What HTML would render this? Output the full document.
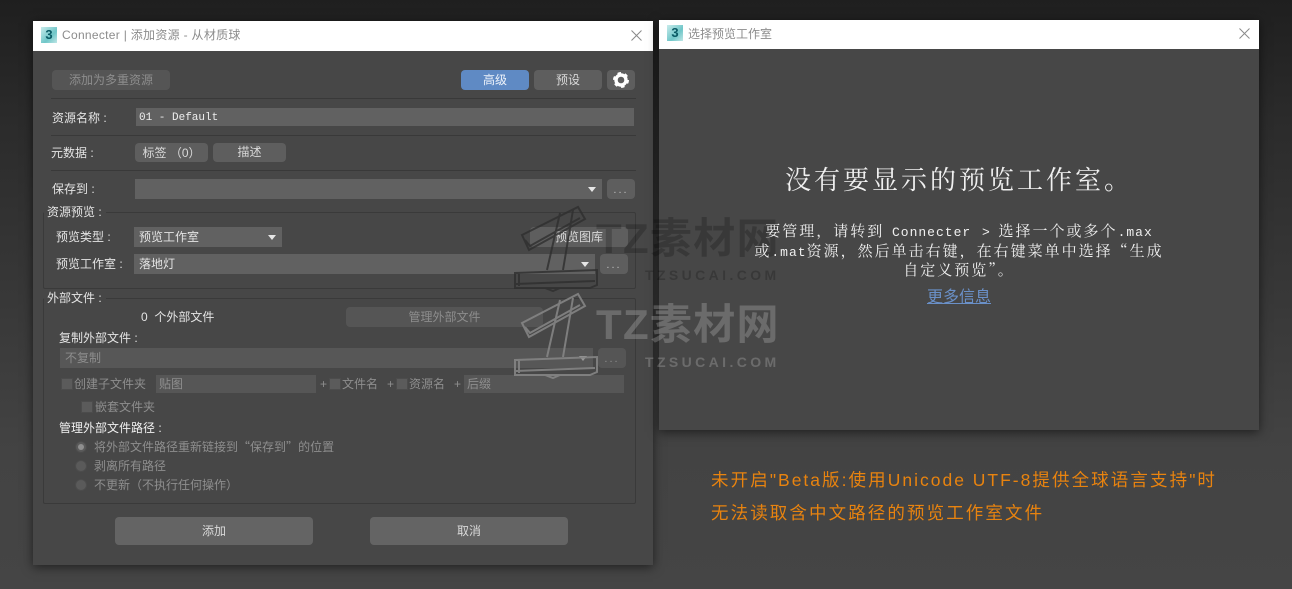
<!DOCTYPE html>
<html lang="zh-CN">
<head>
<meta charset="utf-8">
<title>Connecter</title>
<style>
html,body{margin:0;padding:0}
body{width:1292px;height:589px;overflow:hidden;position:relative;background:linear-gradient(180deg,#1f1f1f 0,#2b2b2b 120px,#383838 300px,#434343 450px,#454545 589px);font-family:"Liberation Sans","WenQuanYi Zen Hei","Noto Sans CJK SC",sans-serif;font-size:12px;color:#e4e4e4}
div,svg{position:absolute}
.dlg{background:#474747;box-shadow:0 2px 10px rgba(0,0,0,.55)}
.bar{background:#fff;color:#8c8c8c;font-size:12px;white-space:nowrap}
.t{white-space:nowrap;line-height:18px;height:18px}
.btn{background:#5e5e5e;border-radius:4px;text-align:center;color:#d9d9d9}
.dis{background:#555;color:#8d8d8d}
.inp{background:#616161}
.sep{height:1px;background:#393939;left:51px;width:585px}
.grp{border:1px solid #3a3a3a;border-radius:2px;box-sizing:border-box}
.lab{background:#474747;padding:0 4px 0 3px}
.gr{color:#8e8e8e}
.cb{width:10px;height:10px;background:#5b5b5b;box-shadow:0 0 0 1px #4c4c4c}
.rad{width:10px;height:10px;border-radius:50%;background:#5a5a5a;box-shadow:0 0 0 1px #4c4c4c;left:76px}
.arr{width:0;height:0;border-left:4px solid transparent;border-right:4px solid transparent;border-top:5px solid #e6e6e6}
.dots{letter-spacing:2px;color:#bdbdbd;font-size:11px}
.serif{font-family:"Liberation Serif","Noto Serif CJK SC",serif}
.ico{width:16px;height:16px;background:linear-gradient(135deg,#c9ecec,#6fc6c8 60%,#bfe6e6);color:#0a5a64;font:bold 13px/15px "Liberation Sans",sans-serif;text-align:center}
.wm{font-weight:bold;white-space:nowrap;font-family:"Liberation Sans","Noto Sans CJK SC",sans-serif}
.big{font-size:42px;line-height:44px;letter-spacing:1.3px;left:596px}
.sm{font-size:14px;line-height:16px;letter-spacing:3.4px;left:645px}
.msg{left:659px;width:600px;text-align:center;white-space:nowrap;color:#f0f0f0}
.or{left:711px;color:#e8830f;font-family:"Liberation Sans","Noto Sans CJK SC",sans-serif;font-size:17.5px;line-height:24px;white-space:nowrap;letter-spacing:2.1px}
.lt{letter-spacing:2px}
.l{font:13px "Liberation Mono",monospace;letter-spacing:1px}
.q{font-family:"Noto Sans CJK SC",sans-serif}
.qs{font-family:"Noto Serif CJK SC",serif}
.b{font-size:15px;line-height:19px;letter-spacing:2px;word-spacing:2px}
</style>
</head>
<body>

<!-- left dialog -->
<div class="dlg" style="left:33px;top:21px;width:620px;height:544px"></div>
<div class="bar" style="left:33px;top:21px;width:620px;height:30px"></div>
<div class="ico" style="left:41px;top:27px">3</div>
<div class="t" style="left:62px;top:26px;color:#8c8c8c;letter-spacing:.3px">Connecter | 添加资源 - 从材质球</div>
<svg style="left:630px;top:29px" width="13" height="13" viewBox="0 0 13 13"><path d="M1.5 1.5L11.5 11.5M11.5 1.5L1.5 11.5" stroke="#8a8a8a" stroke-width="1" fill="none"/></svg>

<div class="btn dis t" style="left:52px;top:70px;width:118px;height:20px;line-height:20px">添加为多重资源</div>
<div class="btn t" style="left:461px;top:70px;width:68px;height:20px;line-height:20px;background:#5f8ac4;color:#eef3fa">高级</div>
<div class="btn t" style="left:534px;top:70px;width:68px;height:20px;line-height:20px">预设</div>
<div class="btn" style="left:607px;top:70px;width:28px;height:20px"></div>
<svg style="left:612px;top:71px" width="18" height="18" viewBox="0 0 18 18"><circle cx="9" cy="9" r="5" fill="none" stroke="#fff" stroke-width="3.4"/><circle cx="9" cy="9" r="7" fill="none" stroke="#fff" stroke-width="2" stroke-dasharray="3.5 3.83"/></svg>

<div class="sep" style="top:98px"></div>
<div class="t" style="left:52px;top:109px">资源名称 :</div>
<div class="inp" style="left:136px;top:108px;width:498px;height:18px"></div>
<div class="t" style="left:139px;top:109px;font:11px/18px 'Liberation Mono',monospace;color:#eee">01 - Default</div>

<div class="sep" style="top:135px"></div>
<div class="t" style="left:51px;top:144px">元数据 :</div>
<div class="btn t" style="left:135px;top:143px;width:73px;height:19px;line-height:19px">标签 <span class="q">（</span>0<span class="q">）</span></div>
<div class="btn t" style="left:213px;top:143px;width:73px;height:19px;line-height:19px">描述</div>

<div class="sep" style="top:170px"></div>
<div class="t" style="left:52px;top:180px">保存到 :</div>
<div class="inp" style="left:135px;top:179px;width:467px;height:20px"></div>
<div class="arr" style="left:588px;top:187px"></div>
<div class="btn dots t" style="left:607px;top:179px;width:28px;height:20px;line-height:22px">...</div>

<!-- preview group -->
<div class="grp" style="left:43px;top:212px;width:593px;height:77px"></div>
<div class="t lab" style="left:44px;top:203px">资源预览 :</div>
<div class="t" style="left:56px;top:228px">预览类型 :</div>
<div class="inp t" style="left:134px;top:227px;width:148px;height:20px;line-height:20px;text-indent:5px">预览工作室</div>
<div class="arr" style="left:268px;top:235px"></div>
<div class="btn t" style="left:530px;top:227px;width:98px;height:20px;line-height:20px">预览图库</div>
<div class="t" style="left:56px;top:255px">预览工作室 :</div>
<div class="inp t" style="left:134px;top:254px;width:461px;height:20px;line-height:20px;text-indent:5px">落地灯</div>
<div class="arr" style="left:581px;top:262px"></div>
<div class="btn dots t" style="left:600px;top:254px;width:28px;height:20px;line-height:22px">...</div>

<!-- external files group -->
<div class="grp" style="left:43px;top:298px;width:593px;height:206px"></div>
<div class="t lab" style="left:44px;top:289px">外部文件 :</div>
<div class="t" style="left:141px;top:308px">0&nbsp; 个外部文件</div>
<div class="btn dis t" style="left:346px;top:307px;width:197px;height:20px;line-height:20px">管理外部文件</div>
<div class="t" style="left:59px;top:329px">复制外部文件 :</div>
<div class="inp dis t" style="left:60px;top:348px;width:533px;height:20px;line-height:20px;text-indent:5px;color:#8d8d8d;background:#575757">不复制</div>
<div class="arr" style="left:579px;top:356px;border-top-color:#999"></div>
<div class="btn dis dots t" style="left:598px;top:348px;width:28px;height:20px;line-height:22px;color:#8d8d8d">...</div>

<div class="cb" style="left:62px;top:379px"></div>
<div class="t gr" style="left:74px;top:375px">创建子文件夹</div>
<div class="inp t gr" style="left:156px;top:375px;width:160px;height:18px;text-indent:3px;background:#565656">贴图</div>
<div class="t gr" style="left:320px;top:375px">+</div>
<div class="cb" style="left:330px;top:379px"></div>
<div class="t gr" style="left:342px;top:375px">文件名</div>
<div class="t gr" style="left:387px;top:375px">+</div>
<div class="cb" style="left:397px;top:379px"></div>
<div class="t gr" style="left:409px;top:375px">资源名</div>
<div class="t gr" style="left:454px;top:375px">+</div>
<div class="inp t gr" style="left:464px;top:375px;width:160px;height:18px;text-indent:3px;background:#565656">后缀</div>

<div class="cb" style="left:82px;top:402px"></div>
<div class="t gr" style="left:95px;top:398px">嵌套文件夹</div>
<div class="t" style="left:59px;top:419px;color:#f0f0f0">管理外部文件路径 :</div>

<div class="rad" style="top:442px"></div>
<div style="left:78px;top:444px;width:6px;height:6px;border-radius:50%;background:#8f8f8f"></div>
<div class="t gr" style="left:94px;top:438px">将外部文件路径重新链接到<span class="q">“</span>保存到<span class="q">”</span>的位置</div>
<div class="rad" style="top:461px"></div>
<div class="t gr" style="left:94px;top:457px">剥离所有路径</div>
<div class="rad" style="top:480px"></div>
<div class="t gr" style="left:94px;top:476px">不更新（不执行任何操作）</div>

<div class="btn t" style="left:115px;top:517px;width:198px;height:28px;line-height:28px;background:#646464">添加</div>
<div class="btn t" style="left:370px;top:517px;width:198px;height:28px;line-height:28px;background:#646464">取消</div>

<!-- right dialog -->
<div class="dlg" style="left:659px;top:20px;width:600px;height:410px"></div>
<div class="bar" style="left:659px;top:20px;width:600px;height:29px"></div>
<div class="ico" style="left:667px;top:25px">3</div>
<div class="t" style="left:688px;top:25px;color:#8c8c8c">选择预览工作室</div>
<svg style="left:1238px;top:27px" width="13" height="13" viewBox="0 0 13 13"><path d="M1.5 1.5L11.5 11.5M11.5 1.5L1.5 11.5" stroke="#8a8a8a" stroke-width="1" fill="none"/></svg>

<!-- dark watermark -->
<svg style="left:510px;top:200px" width="95" height="95" viewBox="510 200 95 95" fill="none" stroke="#2f2f2f" stroke-width="2" opacity=".8">
<path d="M522 235L578 207L585 219L529 250Z M525 240L530 246L580 218 M560 213L547 270 M573 210L563 270"/>
<path d="M515 273L597 270L597 285L590 288L515 288Z M519 273V286 M515 284L595 281 M545 288L553 291L560 288"/>
</svg>
<div class="wm big" style="top:217px;color:rgba(0,0,0,.2)">TZ素材网</div>
<div class="wm sm" style="top:267px;color:rgba(0,0,0,.2)">TZSUCAI.COM</div>

<!-- light watermark -->
<svg style="left:510px;top:288px" width="95" height="95" viewBox="510 288 95 95" fill="none" stroke="#858585" stroke-width="2" opacity=".9">
<path d="M522 323L578 294L585 306L529 337Z M525 327L530 333L580 305 M560 300L547 357 M573 298L563 357"/>
<path d="M515 360L597 357L597 372L590 375L515 375Z M519 360V373 M515 371L595 368 M545 375L553 378L560 375"/>
</svg>
<div class="wm big" style="top:303px;color:rgba(255,255,255,.2)">TZ素材网</div>
<div class="wm sm" style="top:354px;color:rgba(255,255,255,.2)">TZSUCAI.COM</div>

<!-- right dialog text -->
<div class="msg serif" style="top:163px;font-size:26px;line-height:36px;letter-spacing:3px">没有要显示的预览工作室。</div>
<div class="msg serif b" style="top:223px">要管理，请转到 <span class="l">Connecter &gt;</span> 选择一个或多个<span class="l">.max</span></div>
<div class="msg serif b" style="top:241px">或<span class="l">.mat</span>资源，然后单击右键，在右键菜单中选择<span class="qs">“</span>生成</div>
<div class="msg serif b" style="top:260px">自定义预览<span class="qs">”</span>。</div>
<div class="msg" style="top:288px;font-size:16px;line-height:20px;color:#6a90c8;text-decoration:underline">更多信息</div>

<div class="or" style="top:468px">未开启<span class="lt">"Beta</span>版<span class="lt">:</span>使用<span class="lt">Unicode UTF-8</span>提供全球语言支持<span class="lt">"</span>时</div>
<div class="or" style="top:501px">无法读取含中文路径的预览工作室文件</div>

</body>
</html>
